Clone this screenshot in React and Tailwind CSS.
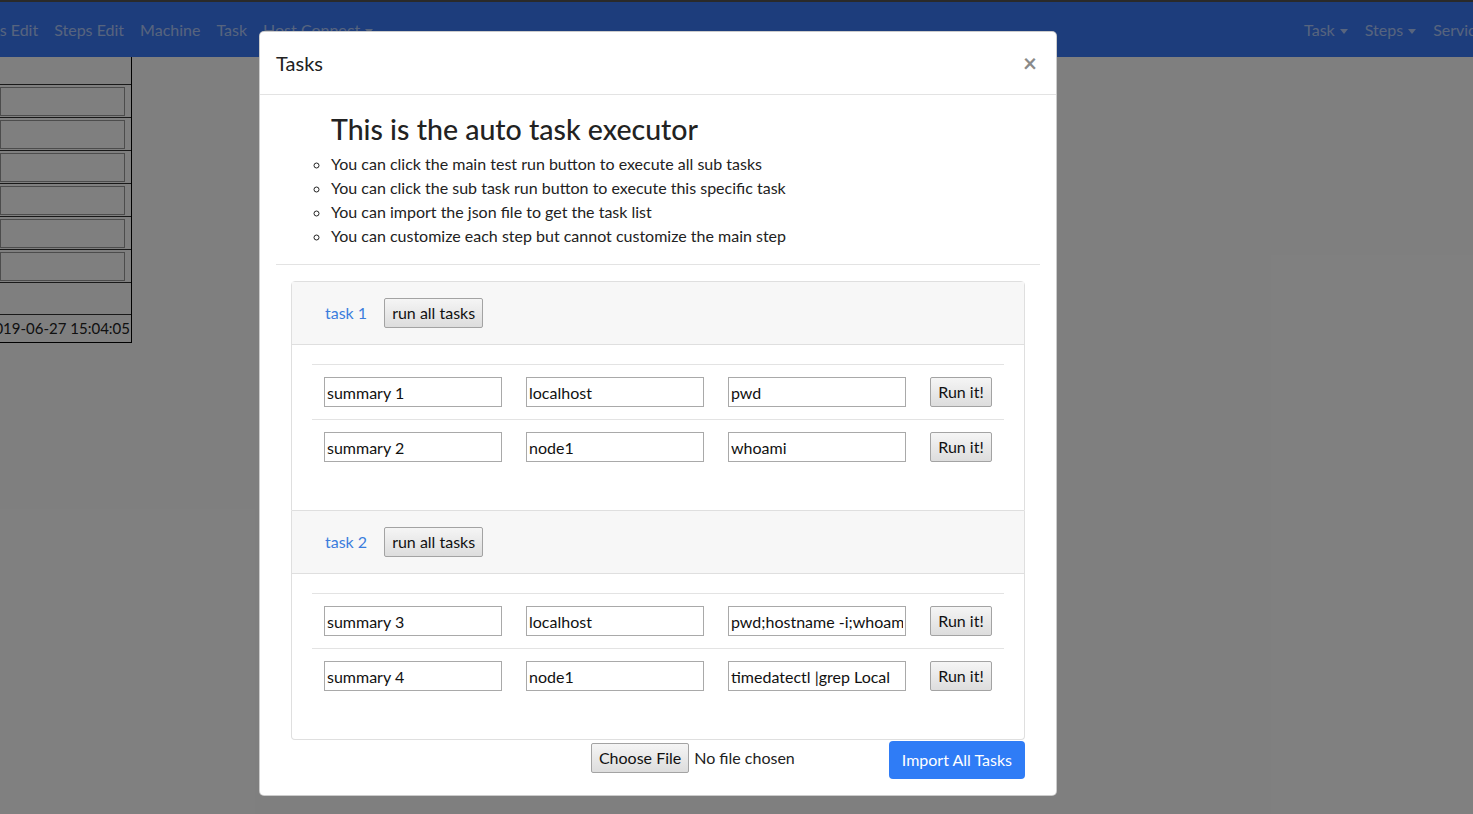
import React from "react";

const font = { fontFamily: "Lato, 'Noto Sans', sans-serif" };

const tasks = [
  {
    name: "task 1",
    steps: [
      { summary: "summary 1", host: "localhost", cmd: "pwd" },
      { summary: "summary 2", host: "node1", cmd: "whoami" },
    ],
  },
  {
    name: "task 2",
    steps: [
      { summary: "summary 3", host: "localhost", cmd: "pwd;hostname -i;whoami" },
      { summary: "summary 4", host: "node1", cmd: "timedatectl |grep Local" },
    ],
  },
];

const tips = [
  "You can click the main test run button to execute all sub tasks",
  "You can click the sub task run button to execute this specific task",
  "You can import the json file to get the task list",
  "You can customize each step but cannot customize the main step",
];

function Caret() {
  return (
    <span className="inline-block ml-[5px] align-middle w-0 h-0 border-t-[5px] border-x-[4px] border-x-transparent border-t-current" />
  );
}

function NativeButton({ children, className = "" }) {
  return (
    <button
      className={
        "h-[30px] px-[7px] text-[16px] text-[#111] border border-[#a3a3a3] rounded-[2px] bg-gradient-to-b from-[#f5f5f5] to-[#dddddd] " +
        className
      }
    >
      {children}
    </button>
  );
}

function Field({ value }) {
  return (
    <input
      readOnly
      value={value}
      className="w-[178px] h-[30px] px-[2px] text-[16px] text-[#111] border border-[#a9a9a9] bg-white outline-none"
    />
  );
}

function TaskCard({ task, first }) {
  return (
    <div className={"border border-[#dfdfdf] " + (first ? "rounded-t-[4px]" : "border-t-0 rounded-b-[4px]")}>
      <div className="h-[63px] flex items-center pl-[33px] gap-[17px] bg-[#f7f7f7] border-b border-[#dfdfdf]">
        <span className="text-[16px] text-[#3b7ddd]">{task.name}</span>
        <NativeButton>run all tasks</NativeButton>
      </div>
      <div className="px-[20px] pt-[19px] pb-[36px]">
        {task.steps.map((s) => (
          <div key={s.summary} className="flex items-center h-[55px] border-t border-[#e3e3e3]">
            <div className="px-[12px]">
              <Field value={s.summary} />
            </div>
            <div className="px-[12px]">
              <Field value={s.host} />
            </div>
            <div className="px-[12px]">
              <Field value={s.cmd} />
            </div>
            <div className="px-[12px]">
              <NativeButton className="w-[62px] px-0">Run it!</NativeButton>
            </div>
          </div>
        ))}
      </div>
    </div>
  );
}

export default function App() {
  return (
    <div className="relative w-[1473px] h-[814px] overflow-hidden bg-white" style={font}>
      <div className="h-[2px] bg-[#555]" />
      <nav className="h-[55px] bg-[#3a7af8] flex items-center justify-between overflow-hidden text-[16px] text-white/60">
        <div className="flex items-center gap-[16px] ml-[-34px] whitespace-nowrap">
          <span>Hosts Edit</span>
          <span>Steps Edit</span>
          <span>Machine</span>
          <span>Task</span>
          <span>
            Host Connect
            <Caret />
          </span>
        </div>
        <div className="flex items-center gap-[17px] mr-[-18px] whitespace-nowrap">
          <span>
            Task
            <Caret />
          </span>
          <span>
            Steps
            <Caret />
          </span>
          <span>Services</span>
        </div>
      </nav>

      <div className="w-[132px] border-r border-b border-black">
        <div className="h-[28px] border-b border-[#333]" />
        {[0, 1, 2, 3, 4, 5].map((i) => (
          <div key={i} className="h-[33px] border-b border-[#333] flex items-center pr-[6px]">
            <div className="w-full h-[29px] border border-[#999]" />
          </div>
        ))}
        <div className="h-[32px] border-b border-[#333]" />
        <div className="h-[27px] flex items-center justify-end pr-[1px] text-[15px] text-[#222] whitespace-nowrap">
          2019-06-27 15:04:05
        </div>
      </div>

      <div className="absolute inset-0 bg-black/50" />

      <div className="absolute left-[259px] top-[31px] w-[798px] h-[765px] bg-white border border-black/20 rounded-[5px] flex flex-col">
        <div className="h-[63px] flex items-center justify-between px-[16px] border-b border-[#e3e3e3]">
          <span className="text-[20px] text-[#222]">Tasks</span>
          <span className="text-[24px] leading-none font-bold text-[#8a8a8a] mr-[3px]">×</span>
        </div>
        <div className="px-[16px] pt-[17px]">
          <h3 className="pl-[55px] text-[28.5px] leading-[34px] font-medium text-[#222]">
            This is the auto task executor
          </h3>
          <ul className="mt-[6px] pl-[55px] list-[circle] text-[16px] leading-[24px] text-[#222]">
            {tips.map((t) => (
              <li key={t}>{t}</li>
            ))}
          </ul>
          <hr className="mt-[16px] border-[#e3e3e3]" />
          <div className="mx-[15px] mt-[16px]">
            {tasks.map((t, i) => (
              <TaskCard key={t.name} task={t} first={i === 0} />
            ))}
          </div>
          <div className="mx-[15px] flex justify-end items-start">
            <div className="flex items-center gap-[5px] mt-[3px] text-[16px] text-[#222]">
              <NativeButton className="h-[29px]">Choose File</NativeButton>
              <span>No file chosen</span>
            </div>
            <button className="ml-[94px] mt-[1px] h-[38px] px-[13px] rounded-[4px] bg-[#2f7cf6] text-white text-[16px]">
              Import All Tasks
            </button>
          </div>
        </div>
      </div>
    </div>
  );
}
